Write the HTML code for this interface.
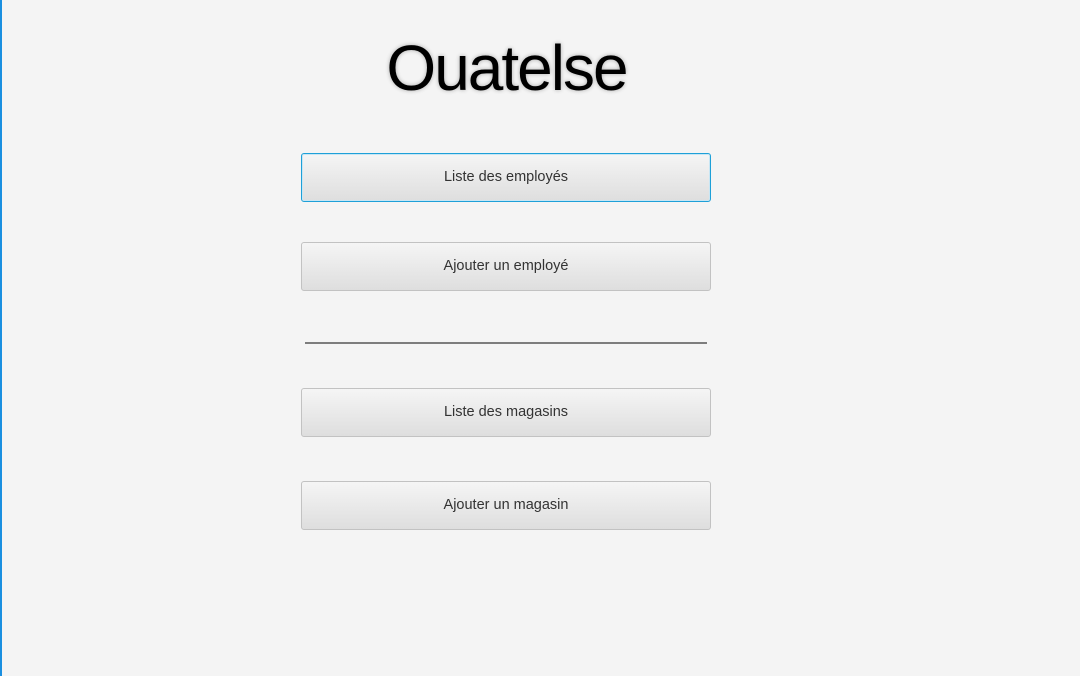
<!DOCTYPE html>
<html><head><style>
html,body{margin:0;padding:0}
body{width:1080px;height:676px;background:#f4f4f4;position:relative;overflow:hidden;font-family:"Liberation Sans",sans-serif}
.edge{position:absolute;left:0;top:0;width:2px;height:676px;background:#1a8fe0}
h1{position:absolute;left:0;width:1013px;top:30px;margin:0;text-align:center;font-weight:normal;font-size:64px;line-height:76px;letter-spacing:-2px;color:#000;text-shadow:0 0 4px rgba(0,0,0,.3)}
.btn{position:absolute;left:301px;width:408px;height:47px;border:1px solid #c2c2c2;border-radius:3px;background:linear-gradient(#f5f5f5,#dedede);color:#333;font-size:14.5px;text-align:center;line-height:47px}
.focus{border-color:#1ea0d8;box-shadow:inset 0 0 0 1px #c8e6f4}
.line{position:absolute;left:305px;top:342px;width:402px;height:2px;background:#7d7d7d}
</style></head><body>
<div class="edge"></div>
<h1>Ouatelse</h1>
<div class="btn focus" style="top:153px">Liste des employés</div>
<div class="btn" style="top:242px">Ajouter un employé</div>
<div class="line"></div>
<div class="btn" style="top:388px">Liste des magasins</div>
<div class="btn" style="top:481px">Ajouter un magasin</div>
</body></html>
